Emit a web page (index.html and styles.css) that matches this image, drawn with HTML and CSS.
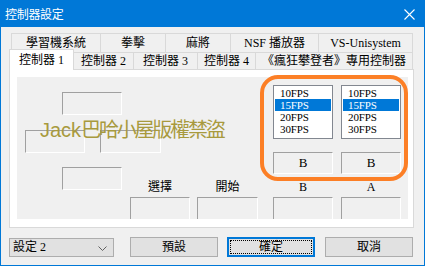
FILE: index.html
```html
<!DOCTYPE html>
<html lang="zh-Hant">
<head>
<meta charset="utf-8">
<title>控制器設定</title>
<link rel="stylesheet" href="styles.css">
</head>
<body>
<div class="window">
  <div class="titlebar">
    <span class="title">控制器設定</span>
    <svg class="close" width="11" height="11" viewBox="0 0 11 11"><path d="M0.5 0.5 L10.5 10.5 M10.5 0.5 L0.5 10.5" stroke="#fff" stroke-width="1.1" fill="none"/></svg>
  </div>
  <div class="content">
    <div class="tabrow back">
      <div class="tab b1">學習機系統</div>
      <div class="tab b2">拳擊</div>
      <div class="tab b3">麻將</div>
      <div class="tab b4">NSF 播放器</div>
      <div class="tab b5">VS-Unisystem</div>
    </div>
    <div class="tabrow front">
      <div class="tab f1 selected">控制器 1</div>
      <div class="tab f2">控制器 2</div>
      <div class="tab f3">控制器 3</div>
      <div class="tab f4">控制器 4</div>
      <div class="tab f5">《瘋狂攀登者》專用控制器</div>
    </div>
    <div class="panel">
      <div class="inner">
        <div class="dpad">
          <div class="box up"></div>
          <div class="mid">
            <div class="box"></div>
            <div class="box wide"></div>
          </div>
          <div class="box down"></div>
        </div>
        <div class="right">
          <div class="listbox c3 r1">
            <div class="item">10FPS</div>
            <div class="item sel">15FPS</div>
            <div class="item">20FPS</div>
            <div class="item">30FPS</div>
          </div>
          <div class="listbox c4 r1">
            <div class="item">10FPS</div>
            <div class="item sel">15FPS</div>
            <div class="item">20FPS</div>
            <div class="item">30FPS</div>
          </div>
          <div class="box keybtn c3 r2">B</div>
          <div class="box keybtn c4 r2">B</div>
          <div class="label c1 r3">選擇</div>
          <div class="label c2 r3">開始</div>
          <div class="label c3 r3">B</div>
          <div class="label c4 r3">A</div>
          <div class="box c1 r4"></div>
          <div class="box c2 r4"></div>
          <div class="box c3 r4"></div>
          <div class="box c4 r4"></div>
        </div>
      </div>
    </div>
    <div class="bottom">
      <div class="combo"><span>設定 2</span><svg class="chev" width="9" height="5" viewBox="0 0 9 5"><path d="M0.5 0.5 L4.5 4.5 L8.5 0.5" stroke="#606060" fill="none"/></svg></div>
      <div class="btn b-default">預設</div>
      <div class="btn b-ok focused">確定</div>
      <div class="btn b-cancel">取消</div>
    </div>
  </div>
</div>
<div class="watermark"><span class="wm-latin">Jack</span><span class="wm-cjk">巴哈小屋版權禁盜</span></div>
<div class="highlight"></div>
</body>
</html>
```
FILE: styles.css
```css
* { box-sizing: border-box; }
html, body { margin: 0; padding: 0; }
body {
  position: relative;
  width: 425px;
  height: 266px;
  overflow: hidden;
  font-family: "Liberation Serif", "Noto Sans CJK TC", serif;
  font-size: 12px;
  color: #000;
  background: #f0f0f0;
}
.window {
  width: 425px;
  height: 266px;
  border: 1px solid #0078d7;
  background: #f0f0f0;
  display: flex;
  flex-direction: column;
}
.titlebar {
  height: 26px;
  flex: none;
  background: #0078d7;
  display: flex;
  align-items: center;
  justify-content: space-between;
  padding: 0 9px 0 4px;
}
.title {
  font-family: "Noto Sans CJK TC", sans-serif;
  color: #fff;
  font-size: 12px;
  line-height: 14px;
  letter-spacing: -0.3px;
}
.close { display: block; margin-top: 1px; }
.content {
  flex: 1;
  display: flex;
  flex-direction: column;
}
.tabrow {
  display: flex;
  align-items: flex-start;
}
.tabrow.back {
  margin: 6px 0 0 10px;
  height: 19px;
}
.tabrow.front {
  margin-left: 8px;
  height: 17px;
  position: relative;
  z-index: 2;
}
.tab {
  flex: none;
  background: #f0f0f0;
  border-top: 1px solid #d9d9d9;
  border-right: 1px solid #d9d9d9;
  text-align: center;
  white-space: nowrap;
}
.back .tab { height: 19px; line-height: 18px; }
.back .b1 { width: 90px; border-left: 1px solid #d9d9d9; }
.back .b2 { width: 65px; }
.back .b3 { width: 65px; }
.back .b4 { width: 88px; }
.back .b5 { width: 94px; }
.front .tab { height: 17px; line-height: 17px; margin-top: 0; }
.front .f1 { width: 65px; }
.front .f2 { width: 60px; }
.front .f3 { width: 64px; }
.front .f4 { width: 58px; }
.front .f5 { width: 157px; }
.front .selected {
  background: #fff;
  border-left: 1px solid #d9d9d9;
  height: 21px;
  margin-top: -3px;
  margin-bottom: -1px;
  line-height: 16px;
  padding-top: 2px;
}
.panel {
  margin-left: 8px;
  width: 405px;
  height: 159px;
  border: 1px solid #d9d9d9;
  background: #fff;
  padding: 7px 5px 8px 7px;
  flex: none;
}
.inner {
  width: 391px;
  height: 142px;
  background: #f0f0f0;
  overflow: hidden;
  display: grid;
  grid-template-columns: 1fr;
  grid-template-rows: 1fr;
}
.box {
  width: 60px;
  height: 23px;
  border-top: 1px solid #a0a0a0;
  border-left: 1px solid #a0a0a0;
  border-right: 1px solid #fff;
  border-bottom: 1px solid #fff;
  background: #f0f0f0;
}
.dpad {
  grid-area: 1 / 1;
  margin: 15px 0 0 8px;
  display: flex;
  flex-direction: column;
  align-items: flex-start;
}
.dpad .up { margin-left: 37px; }
.dpad .mid {
  display: flex;
  gap: 15px;
  margin-top: 15px;
}
.dpad .wide { width: 61px; }
.dpad .down { margin: 14px 0 0 37px; }
.right {
  grid-area: 1 / 1;
  margin: 8px 0 0 113px;
  display: grid;
  grid-template-columns: 60px 7px 61px 15px 60px 8px 60px;
  grid-template-rows: 54px 13px 22px 23px 30px;
  align-self: start;
  justify-self: start;
}
.c1 { grid-column: 1; }
.c2 { grid-column: 3; }
.c3 { grid-column: 5; }
.c4 { grid-column: 7; }
.r1 { grid-row: 1; }
.r2 { grid-row: 3; }
.r3 { grid-row: 4; }
.r4 { grid-row: 5; }
.right .box { width: 100%; height: 24px; }
.listbox {
  background: #fff;
  border: 1px solid #828790;
  padding: 1px;
}
.item {
  height: 12px;
  line-height: 12px;
  padding-left: 5px;
  font-size: 11px;
  letter-spacing: -0.1px;
  overflow: hidden;
}
.item.sel { background: #0078d7; color: #fff; }
.right .keybtn {
  height: 22px;
  text-align: center;
  line-height: 20px;
  font-size: 13px;
}
.label {
  align-self: end;
  text-align: center;
  line-height: 14px;
  padding-bottom: 3px;
  font-size: 12px;
}
.bottom {
  display: flex;
  align-items: flex-start;
  margin: 9px 0 0 8px;
}
.combo {
  width: 105px;
  height: 19px;
  margin-top: 1px;
  background: #e1e1e1;
  border: 1px solid #adadad;
  display: flex;
  align-items: center;
  justify-content: space-between;
  padding: 0 6px 0 3px;
  line-height: 17px;
}
.chev { display: block; margin-top: 1px; }
.btn {
  position: relative;
  width: 88px;
  height: 20px;
  background: #e1e1e1;
  border: 1px solid #adadad;
  text-align: center;
  line-height: 18px;
}
.b-default { margin-left: 16px; }
.b-ok { margin-left: 9px; }
.b-cancel { margin-left: 10px; }
.btn.focused {
  border: 2px solid #0078d7;
  line-height: 16px;
}
.btn.focused::after {
  content: "";
  position: absolute;
  inset: 1px;
  border: 1px dotted #000;
}
.watermark {
  position: absolute;
  left: 40px;
  top: 119px;
  font-family: "Liberation Sans", "Noto Sans CJK TC", sans-serif;
  font-size: 20px;
  line-height: 22px;
  color: #a89a3e;
  white-space: nowrap;
  pointer-events: none;
}
.wm-latin { letter-spacing: 0; }
.wm-cjk { letter-spacing: -2.2px; }
.highlight {
  position: absolute;
  left: 260px;
  top: 75px;
  width: 148px;
  height: 106px;
  border: 4px solid #fc7f26;
  border-radius: 18px;
  pointer-events: none;
}
```
